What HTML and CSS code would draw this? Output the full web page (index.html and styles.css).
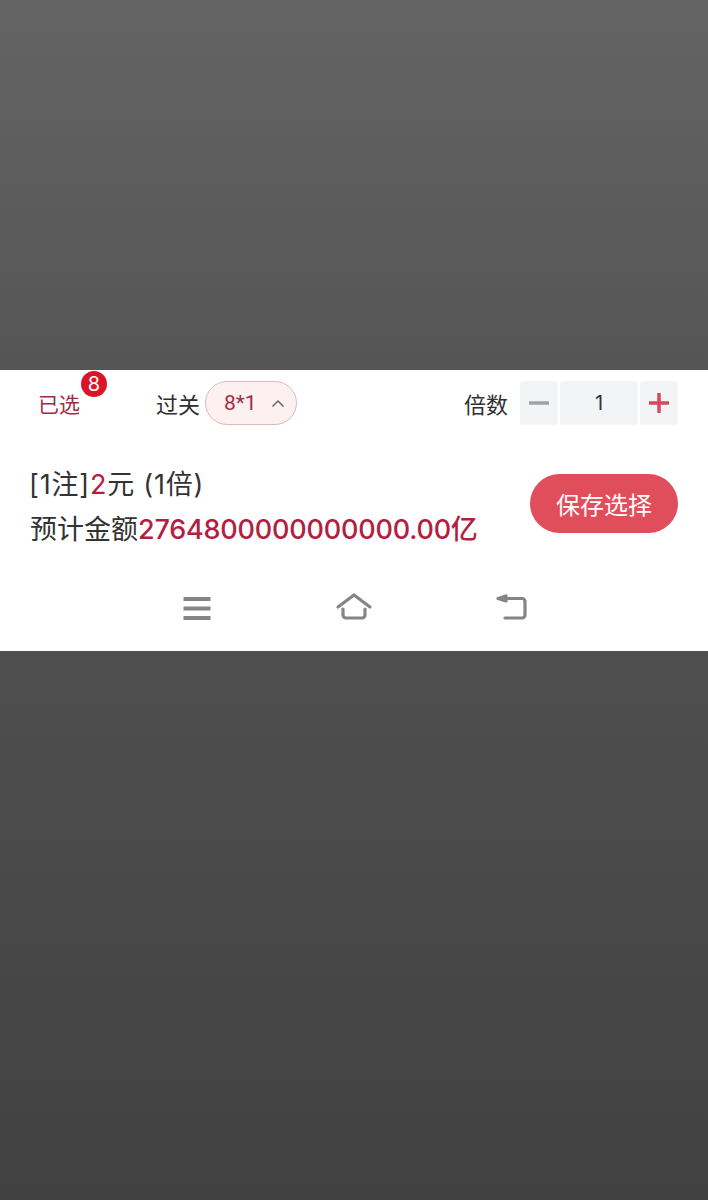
FILE: index.html
```html
<!DOCTYPE html>
<html lang="zh-CN">
<head>
<meta charset="utf-8">
<title>已选</title>
<link rel="stylesheet" href="styles.css">
</head>
<body>
<div class="screen">
  <section class="panel">
    <div class="options">
      <div class="picked"><span class="picked-label">已选</span><span class="badge">8</span></div>
      <div class="pass">
        <span class="label">过关</span>
        <button class="pill"><span>8*1</span>
          <svg class="chevron" width="14" height="9" viewBox="0 0 14 9"><path d="M1.500 7.500 7 2l5.500 5.500"/></svg>
        </button>
      </div>
      <div class="multi">
        <span class="label">倍数</span>
        <div class="stepper">
          <span class="step"><svg width="20" height="20" viewBox="0 0 20 20"><path class="minus" d="M0 10h20"/></svg></span>
          <span class="value">1</span>
          <span class="step"><svg width="20" height="20" viewBox="0 0 20 20"><path class="plus" d="M0 10h20M10 0v20"/></svg></span>
        </div>
      </div>
    </div>
    <div class="summary">
      <div class="texts">
        <p class="line line-price">[1注]<em>2</em>元 (1倍)</p>
        <p class="line">预计金额<em class="amount">2764800000000000.00亿</em></p>
      </div>
      <button class="save">保存选择</button>
    </div>
    <nav class="sysnav">
      <svg width="40" height="30" viewBox="0 0 40 30"><path class="bars" d="M6.500 6h27M6.500 15.500h27M6.500 25h27"/></svg>
      <svg width="40" height="30" viewBox="0 0 40 30"><path d="M4 14 20 2l16 12M9 16v6a3 3 0 0 0 3 3h16a3 3 0 0 0 3-3v-6"/></svg>
      <svg width="40" height="30" viewBox="0 0 40 30"><path d="M7 5.500l8-2.500v5zM14 5.500h17a3 3 0 0 1 3 3V22a3 3 0 0 1-3 3H14"/></svg>
    </nav>
  </section>
</div>
</body>
</html>
```
FILE: styles.css
```css
* { box-sizing: border-box; }
html, body { margin: 0; }
body {
  font-family: Inter, "Noto Sans CJK SC", sans-serif;
  color: #333;
}
.screen {
  height: 1200px;
  padding-top: 370px;
  background: linear-gradient(#646464 0, #555 370px, #4f4f4f 651px, #414141 1200px);
}
.panel {
  height: 281px;
  background: #fff;
  display: flex;
  flex-direction: column;
}
.options {
  display: flex;
  align-items: center;
  height: 44px;
  margin-top: 11px;
  padding: 0 30px 0 38px;
}
.picked { position: relative; width: 118px; }
.picked-label { font-size: 21px; color: #a32b47; font-family: "Noto Sans CJK SC", sans-serif; }
.badge {
  position: absolute;
  left: 43px;
  top: -17px;
  width: 26px;
  height: 26px;
  border-radius: 50%;
  background: #dc1428;
  color: #fff;
  font-size: 20px;
  line-height: 26px;
  text-align: center;
}
.pass { display: flex; align-items: center; gap: 5px; }
.label { font-size: 22px; color: #2f2f2f; font-family: "Noto Sans CJK SC", sans-serif; }
.pill {
  display: flex;
  align-items: center;
  gap: 14px;
  width: 92px;
  height: 44px;
  padding: 0 0 0 18px;
  border: 1px solid #dfb8bd;
  border-radius: 22px;
  background: #fdf0f1;
  color: #a32b47;
  font: 21px Roboto, sans-serif;
}
.chevron { fill: none; stroke: #666; stroke-width: 1.500; }
.multi { display: flex; align-items: center; gap: 12px; margin-left: auto; }
.stepper { display: flex; gap: 2px; }
.step, .value {
  display: flex;
  align-items: center;
  justify-content: center;
  height: 44px;
  background: #f3f4f6;
  border-radius: 3px;
}
.step { width: 38px; }
.value { width: 78px; font-size: 20px; color: #333; }
.step svg { fill: none; stroke-width: 3.500; }
.minus { stroke: #a0a2a3; }
.plus { stroke: #dc4560; }
.summary {
  display: flex;
  justify-content: space-between;
  align-items: center;
  margin-top: 42px;
  padding: 0 30px;
}
.texts { display: flex; flex-direction: column; gap: 9px; }
.line {
  margin: 0;
  font-size: 27px;
  line-height: 36px;
  color: #333;
  font-family: Inter, "Noto Sans CJK SC", sans-serif;
  white-space: nowrap;
}
.line-price { letter-spacing: 0.800px; margin-left: -1px; }
.line em { font-style: normal; color: #b3203f; }
.amount { font-weight: 500; letter-spacing: -0.200px; }
.save {
  width: 148px;
  height: 59px;
  margin-top: -9px;
  border: 0;
  border-radius: 30px;
  background: #e14e5b;
  color: #fff;
  font: 24px "Noto Sans CJK SC", sans-serif;
}
.sysnav {
  display: flex;
  justify-content: center;
  align-items: center;
  gap: 117px;
  margin-top: 45px;
}
.sysnav svg { fill: none; stroke: #858585; stroke-width: 3.200; stroke-linecap: round; stroke-linejoin: round; }
.sysnav .bars { stroke-linecap: butt; stroke-width: 4; }
```
